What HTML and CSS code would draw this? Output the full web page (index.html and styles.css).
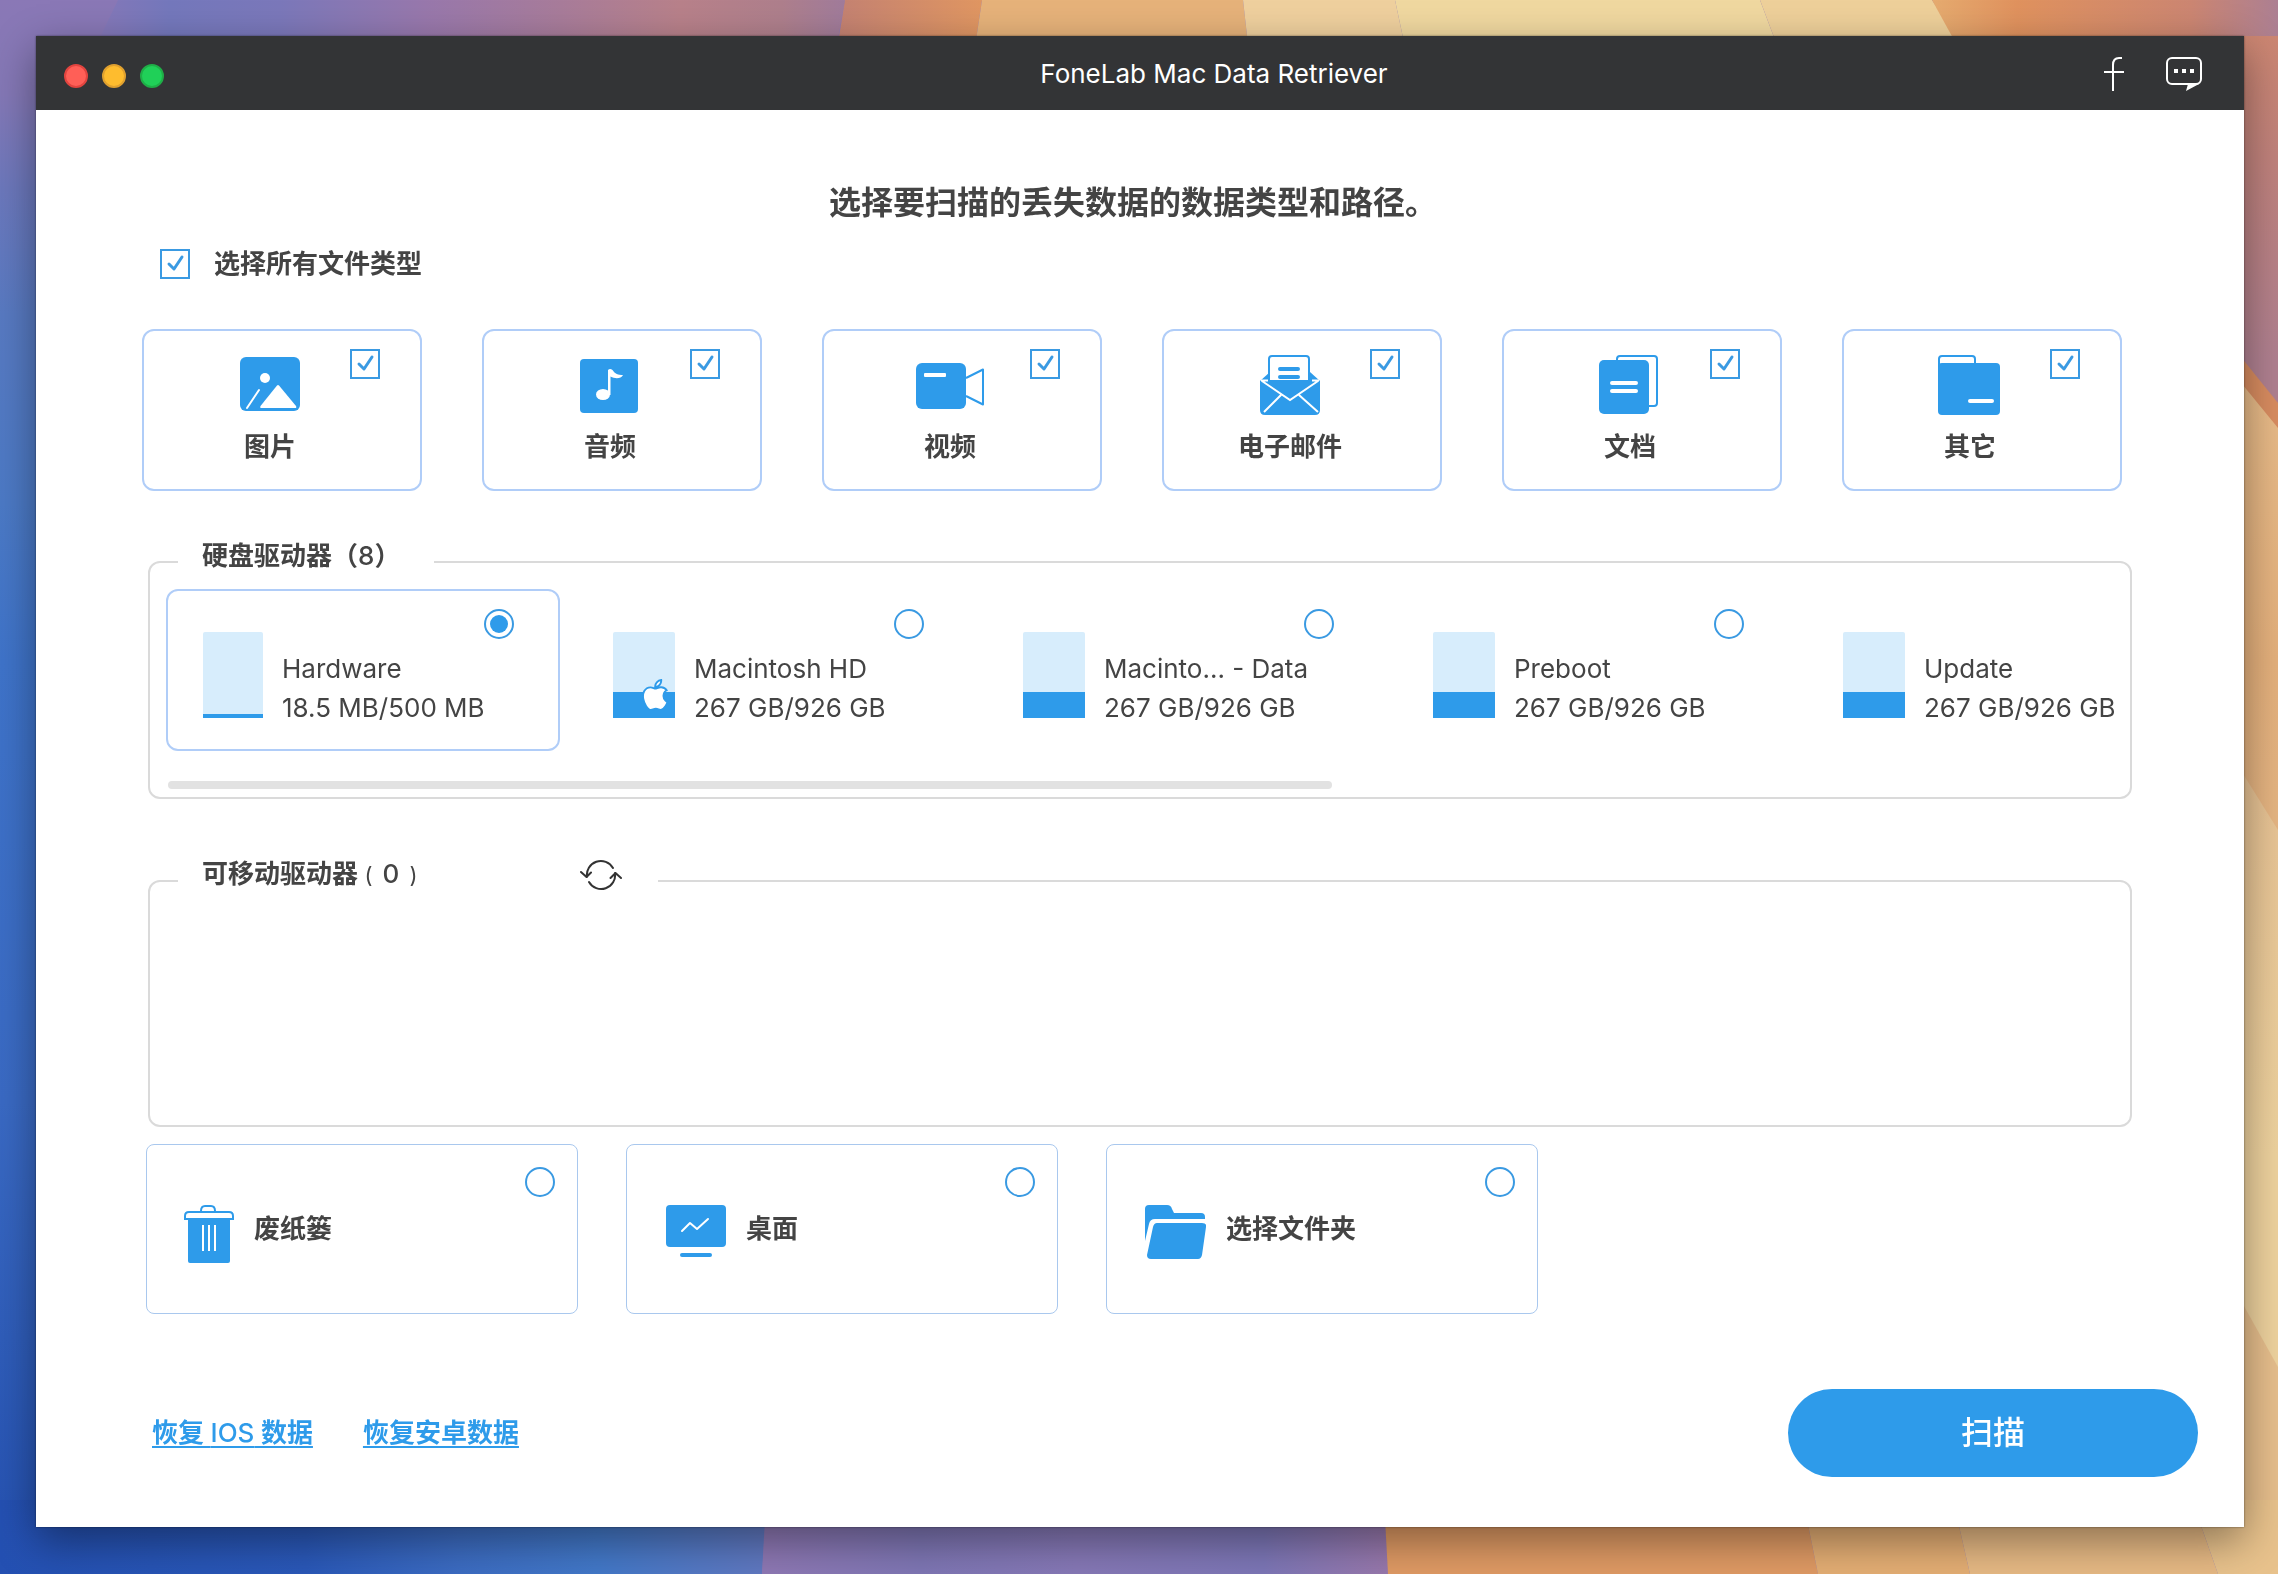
FILE: index.html
```html
<!DOCTYPE html>
<html lang="zh-CN">
<head>
<meta charset="utf-8">
<meta name="viewport" content="width=device-width, initial-scale=1">
<title>FoneLab Mac Data Retriever</title>
<link rel="stylesheet" href="styles.css">
</head>
<body>
<svg class="wallpaper" viewBox="0 0 2278 1574" preserveAspectRatio="none" aria-hidden="true">
  <defs>
    <linearGradient id="topA" gradientUnits="userSpaceOnUse" x1="0" y1="0" x2="850" y2="0">
      <stop offset="0" stop-color="#8c78b6"/><stop offset=".1" stop-color="#8878b8"/><stop offset=".2" stop-color="#7478bc"/><stop offset=".33" stop-color="#7b78ba"/><stop offset=".5" stop-color="#9878ac"/><stop offset=".66" stop-color="#a87c9a"/><stop offset=".8" stop-color="#b8818a"/><stop offset=".92" stop-color="#ae7f8c"/><stop offset="1" stop-color="#9f7b9c"/>
    </linearGradient>
    <linearGradient id="topB" gradientUnits="userSpaceOnUse" x1="840" y1="0" x2="980" y2="0">
      <stop offset="0" stop-color="#c48272"/><stop offset="1" stop-color="#e09662"/>
    </linearGradient>
    <linearGradient id="topC" gradientUnits="userSpaceOnUse" x1="1930" y1="0" x2="2278" y2="0">
      <stop offset="0" stop-color="#e6ac70"/><stop offset=".25" stop-color="#e0925e"/><stop offset=".75" stop-color="#cc8672"/><stop offset="1" stop-color="#ac7f92"/>
    </linearGradient>
    <linearGradient id="left" x1="0" y1="0" x2="0" y2="1">
      <stop offset="0" stop-color="#8a78b6"/><stop offset=".06" stop-color="#8478b6"/><stop offset=".12" stop-color="#6c78bc"/><stop offset=".2" stop-color="#587ac2"/><stop offset=".32" stop-color="#4c7ac6"/><stop offset=".42" stop-color="#3f74ca"/><stop offset=".7" stop-color="#3a6ac4"/><stop offset="1" stop-color="#2450b0"/>
    </linearGradient>
    <linearGradient id="right" x1="0" y1="0" x2="0" y2="1">
      <stop offset="0" stop-color="#cc8672"/><stop offset=".3" stop-color="#c0827c"/><stop offset=".8" stop-color="#b08090"/><stop offset="1" stop-color="#b08090"/>
    </linearGradient>
    <linearGradient id="sand" x1="0" y1="0" x2="0" y2="1">
      <stop offset="0" stop-color="#e8bc8a"/><stop offset=".25" stop-color="#e4b07c"/><stop offset=".5" stop-color="#e6b988"/><stop offset="1" stop-color="#e8c890"/>
    </linearGradient>
    <linearGradient id="sandLow" x1="0" y1="0" x2="0" y2="1">
      <stop offset="0" stop-color="#e6c092"/><stop offset=".5" stop-color="#eed29e"/><stop offset="1" stop-color="#eed29e"/>
    </linearGradient>
    <linearGradient id="bottomA" gradientUnits="userSpaceOnUse" x1="0" y1="0" x2="765" y2="0">
      <stop offset="0" stop-color="#2450b2"/><stop offset=".4" stop-color="#2a58b8"/><stop offset=".6" stop-color="#3c6cc2"/><stop offset=".78" stop-color="#4278c8"/><stop offset="1" stop-color="#6078c0"/>
    </linearGradient>
    <linearGradient id="bottomB" gradientUnits="userSpaceOnUse" x1="765" y1="0" x2="1388" y2="0">
      <stop offset="0" stop-color="#8e78b4"/><stop offset=".25" stop-color="#7e76b4"/><stop offset=".5" stop-color="#8678b6"/><stop offset=".8" stop-color="#7c76b6"/><stop offset="1" stop-color="#9878ac"/>
    </linearGradient>
  </defs>
  <path fill="url(#topA)" d="M0 0H845L820 140H0Z"/>
  <path fill="url(#topB)" d="M845 0H982L970 80H832Z"/>
  <path fill="#e6b27a" d="M982 0H1243L1252 80H970Z"/>
  <path fill="#efd09e" d="M1243 0H1395L1412 80H1252Z"/>
  <path fill="#f0d8a0" d="M1395 0H1760L1790 80H1412Z"/>
  <path fill="#eed09a" d="M1760 0H1932L1985 80H1790Z"/>
  <path fill="url(#topC)" d="M1932 0H2278V80H1976Z"/>
  <path fill="url(#left)" d="M0 0H118L60 120V1574H0Z"/>
  <path fill="url(#right)" d="M2220 36H2278V440H2220Z"/>
  <path fill="#d88c60" d="M2220 331L2278 403V520H2220Z"/>
  <path fill="url(#sand)" d="M2220 357L2278 428V1574H2220Z"/>
  <path fill="url(#sandLow)" d="M2220 737L2278 830V1574H2220Z"/>
  <path fill="#e6be8c" d="M2220 1263L2278 1367V1574H2220Z"/>
  <path fill="url(#bottomA)" d="M0 1500H766L762 1574H0Z"/>
  <path fill="url(#bottomB)" d="M767 1500H1384L1388 1574H762Z"/>
  <path fill="#df9a64" d="M1384 1500H1803L1818 1574H1388Z"/>
  <path fill="#e4ae74" d="M1803 1500H1953L1970 1574H1818Z"/>
  <path fill="#e6b984" d="M1953 1500H2192L2218 1574H1970Z"/>
  <path fill="#e8c28c" d="M2192 1500H2278V1574H2218Z"/>
</svg>

<div class="window">
  <header class="titlebar">
    <div class="lights">
      <button class="light light-close" type="button" aria-label="关闭"></button>
      <button class="light light-min" type="button" aria-label="最小化"></button>
      <button class="light light-max" type="button" aria-label="缩放"></button>
    </div>
    <span class="title">FoneLab Mac Data Retriever</span>
    <div class="actions">
      <button class="icon-button" type="button" aria-label="Facebook">
        <svg width="20" height="34" viewBox="0 0 20 34" fill="none" stroke="#fff" stroke-width="2"><path d="M9 34V8Q9 1 15 1H18M0 15H20"/></svg>
      </button>
      <button class="icon-button" type="button" aria-label="反馈">
        <svg width="36" height="34" viewBox="0 0 36 34"><rect x="1" y="1" width="34" height="26" rx="5" fill="none" stroke="#fff" stroke-width="2"/><path fill="#fff" d="M8 12h4v4H8zM16 12h4v4h-4zM24 12h4v4h-4zM22 27H33L20 34Z"/></svg>
      </button>
    </div>
  </header>

  <main>
    <h1 class="heading">选择要扫描的丢失数据的数据类型和路径。</h1>

    <label class="select-all"><input class="check" type="checkbox" checked>选择所有文件类型</label>

    <section class="types">
      <label class="type">
        <svg class="type-icon" viewBox="0 0 72 60"><rect x="6" y="2" width="60" height="54" rx="6" fill="#2e9bea"/><circle cx="31" cy="23" r="5" fill="#fff"/><path d="M43 30.500Q44 29.500 45 30.500L62 51Q63 53 61 53H27Q25.500 53 26.500 51Z" fill="#fff"/><path d="M25 35L13 53" stroke="#fff" stroke-width="2" stroke-linecap="round"/></svg>
        <span>图片</span><input class="check corner" type="checkbox" checked>
      </label>
      <label class="type">
        <svg class="type-icon" viewBox="0 0 72 60"><rect x="6" y="4" width="58" height="54" rx="4" fill="#2e9bea"/><ellipse cx="29" cy="39.500" rx="7" ry="5.500" fill="#fff"/><path d="M34 40V15Q36 13 38.500 15C41 19 44 20 49 20C47 24 41 24 36.500 21.500V40Z" fill="#fff"/></svg>
        <span>音频</span><input class="check corner" type="checkbox" checked>
      </label>
      <label class="type">
        <svg class="type-icon" viewBox="0 0 72 60"><rect x="2" y="8" width="50" height="46" rx="6" fill="#2e9bea"/><rect x="10" y="18" width="22" height="4" rx="1" fill="#fff"/><path d="M52 23L69 14.500V49.500L52 41" fill="none" stroke="#2e9bea" stroke-width="2" stroke-linejoin="round"/></svg>
        <span>视频</span><input class="check corner" type="checkbox" checked>
      </label>
      <label class="type">
        <svg class="type-icon" viewBox="0 0 72 60"><path d="M6 26L16 17H56L66 26V55Q66 60 61 60H11Q6 60 6 55Z" fill="#2e9bea"/><path d="M15 26V4Q15 1 18 1H52Q55 1 55 4V26Z" fill="#fff" stroke="#2e9bea" stroke-width="2"/><path d="M16 26H54L36 44Z" fill="#2e9bea"/><path d="M26 14H44M26 22H44" stroke="#2e9bea" stroke-width="4" stroke-linecap="round"/><path d="M7 25.500H14M58 25.500H65M8 26L36 45L64 26M27 40L10 57M45 40L64 57" fill="none" stroke="#fff" stroke-width="2"/></svg>
        <span>电子邮件</span><input class="check corner" type="checkbox" checked>
      </label>
      <label class="type">
        <svg class="type-icon" viewBox="0 0 72 60"><rect x="23" y="1" width="40" height="50" rx="3" fill="#fff" stroke="#2e9bea" stroke-width="2"/><rect x="5" y="5" width="50" height="54" rx="5" fill="#2e9bea"/><path d="M18 28H42M18 36H42" stroke="#fff" stroke-width="4" stroke-linecap="round"/></svg>
        <span>文档</span><input class="check corner" type="checkbox" checked>
      </label>
      <label class="type">
        <svg class="type-icon" viewBox="0 0 72 60"><rect x="5" y="1" width="36" height="20" rx="3" fill="#fff" stroke="#2e9bea" stroke-width="2"/><rect x="4" y="8" width="62" height="52" rx="4" fill="#2e9bea"/><path d="M36 46H58" stroke="#fff" stroke-width="4" stroke-linecap="round"/></svg>
        <span>其它</span><input class="check corner" type="checkbox" checked>
      </label>
    </section>

    <fieldset class="group">
      <legend class="legend">硬盘驱动器（<span class="latin">8</span>）</legend>
      <div class="drives">
        <label class="drive selected">
          <span class="gauge"><span class="used" style="height:5%"></span></span>
          <span class="drive-text"><span>Hardware</span><span>18.5 MB/500 MB</span></span>
          <input class="radio corner" type="radio" name="location" checked>
        </label>
        <label class="drive">
          <span class="gauge"><span class="used" style="height:30%"></span>
            <svg class="apple" width="30" height="34" viewBox="-1 -1.500 24 27"><path fill="#fff" stroke="#2e9bea" stroke-width="1.500" d="M12.152 6.896c-.948 0-2.415-1.078-3.96-1.040-2.040.027-3.910 1.183-4.961 3.014-2.117 3.675-.546 9.103 1.519 12.090 1.013 1.454 2.208 3.090 3.792 3.039 1.520-.065 2.090-.987 3.935-.987 1.831 0 2.350.987 3.960.948 1.637-.026 2.676-1.480 3.676-2.948 1.156-1.688 1.636-3.325 1.662-3.415-.039-.013-3.182-1.221-3.220-4.857-.026-3.040 2.480-4.494 2.597-4.559-1.429-2.090-3.623-2.324-4.390-2.376-2-.156-3.675 1.090-4.610 1.090zM15.530 3.830c.843-1.012 1.400-2.427 1.245-3.830-1.207.052-2.662.805-3.532 1.818-.780.896-1.454 2.338-1.273 3.714 1.338.104 2.715-.688 3.559-1.701z"/></svg>
          </span>
          <span class="drive-text"><span>Macintosh HD</span><span>267 GB/926 GB</span></span>
          <input class="radio corner" type="radio" name="location">
        </label>
        <label class="drive">
          <span class="gauge"><span class="used" style="height:30%"></span></span>
          <span class="drive-text"><span>Macinto... - Data</span><span>267 GB/926 GB</span></span>
          <input class="radio corner" type="radio" name="location">
        </label>
        <label class="drive">
          <span class="gauge"><span class="used" style="height:30%"></span></span>
          <span class="drive-text"><span>Preboot</span><span>267 GB/926 GB</span></span>
          <input class="radio corner" type="radio" name="location">
        </label>
        <label class="drive">
          <span class="gauge"><span class="used" style="height:30%"></span></span>
          <span class="drive-text"><span>Update</span><span>267 GB/926 GB</span></span>
          <input class="radio corner" type="radio" name="location">
        </label>
      </div>
      <div class="scroll-thumb" style="width:59.5%"></div>
    </fieldset>

    <fieldset class="group removable">
      <legend class="legend legend-wide">
        <span>可移动驱动器 <span class="paren">(</span><span class="count">0</span><span class="paren">)</span></span>
        <button class="icon-button" type="button" aria-label="刷新">
          <svg width="42" height="32" viewBox="0 0 42 32" fill="none" stroke="#333" stroke-width="2" stroke-linecap="round" stroke-linejoin="round"><path d="M33 9A14 14 0 0 0 7 18M1 13L6.500 18L11 13.500M9 23A14 14 0 0 0 35 14M30.500 19L35.500 14L41 19"/></svg>
        </button>
      </legend>
    </fieldset>

    <section class="places">
      <label class="place">
        <svg width="50" height="62" viewBox="0 0 50 62"><path d="M17 8V6Q17 1 21 1H27Q31 1 31 6V8M1 14V11Q1 7 5 7H45Q49 7 49 11V14Z" fill="#fff" stroke="#2e9bea" stroke-width="2"/><path d="M4 13H46V56Q46 58 44 58H6Q4 58 4 56Z" fill="#2e9bea"/><path d="M19 20V46M25 20V46M31 20V46" stroke="#fff" stroke-width="2"/></svg>
        <span>废纸篓</span><input class="radio corner" type="radio" name="location">
      </label>
      <label class="place">
        <svg width="62" height="62" viewBox="0 0 62 62"><rect x="2" width="60" height="42" rx="4" fill="#2e9bea"/><path d="M18 26L26 18L33 24L44 14" fill="none" stroke="#fff" stroke-width="2" stroke-linecap="round" stroke-linejoin="round"/><path d="M18 50H46" stroke="#2e9bea" stroke-width="4" stroke-linecap="round"/></svg>
        <span>桌面</span><input class="radio corner" type="radio" name="location">
      </label>
      <label class="place">
        <svg width="62" height="62" viewBox="0 0 62 62"><path d="M1 36V4Q1 0 5 0H23Q27 0 28 4L30 8H57Q61 8 61 12V14H11Q6 14 5 19Z" fill="#2e9bea"/><path d="M9 22Q10 18 13 18H58Q63 18 62 22L58 50Q57 54 54 54H7Q3 54 3 50Z" fill="#2e9bea"/></svg>
        <span>选择文件夹</span><input class="radio corner" type="radio" name="location">
      </label>
    </section>
  </main>

  <footer class="footer">
    <a class="link" href="#ios">恢复 <span class="latin">IOS</span> 数据</a>
    <a class="link" href="#android">恢复安卓数据</a>
    <button class="scan" type="button">扫描</button>
  </footer>
</div>
</body>
</html>
```

FILE: styles.css
```css
* {
  box-sizing: border-box;
}

body {
  margin: 0;
  min-height: 100vh;
  padding: 36px 34px 46px 36px;
  background: #8c78b4;
  color: #444;
  font: 600 26px/36px Inter, "Noto Sans CJK SC", sans-serif;
}

button,
input {
  margin: 0;
  font: inherit;
}

.wallpaper {
  position: fixed;
  inset: 0;
  z-index: -1;
  width: 100%;
  height: 100%;
}

.window {
  background: #fff;
  box-shadow: 0 0 2px rgba(0, 0, 0, .5), 0 14px 40px rgba(0, 0, 0, .4);
}

/* Title bar */
.titlebar {
  display: flex;
  align-items: center;
  height: 74px;
  padding: 2px 42px 0 28px;
  background: #333436;
  color: #fff;
}

.lights {
  display: flex;
  gap: 14px;
  padding-top: 4px;
}

.light {
  width: 24px;
  height: 24px;
  padding: 0;
  border: 2px solid;
  border-radius: 50%;
}

.light-close {
  border-color: #e2443f;
  background: #ff5f57;
}

.light-min {
  border-color: #dfa02f;
  background: #febc2e;
}

.light-max {
  border-color: #1fae47;
  background: #20d058;
}

.title {
  flex: 1;
  padding-left: 160px;
  font-weight: 400;
  text-align: center;
}

.actions {
  display: flex;
  gap: 42px;
}

.icon-button {
  display: flex;
  padding: 0;
  border: 0;
  background: none;
}

/* Form controls */
.check,
.radio {
  appearance: none;
  flex: none;
  width: 30px;
  height: 30px;
  border: 2px solid #3a9ae2;
  background: #fff;
}

.check:checked {
  background: #fff url("data:image/svg+xml,%3Csvg xmlns='http://www.w3.org/2000/svg' viewBox='0 0 26 26'%3E%3Cpath d='M7 13L12 18L20 6' fill='none' stroke='%233a9ae2' stroke-width='3' stroke-linecap='round' stroke-linejoin='round'/%3E%3C/svg%3E") center / 26px no-repeat;
}

.radio {
  border-radius: 50%;
}

.radio:checked {
  padding: 4px;
  background: #2e9bea content-box;
}

.corner {
  position: absolute;
}

/* Data types */
.heading {
  margin: 0;
  padding: 71px 14px 0 0;
  font-size: 32px;
  font-weight: 600;
  line-height: 44px;
  text-align: center;
}

.select-all {
  display: flex;
  align-items: center;
  gap: 24px;
  width: fit-content;
  margin: 21px 0 47px 124px;
}

.types {
  display: grid;
  grid-template-columns: repeat(6, 1fr);
  gap: 60px;
  padding: 0 122px 0 106px;
}

.type {
  position: relative;
  display: flex;
  flex-direction: column;
  align-items: center;
  gap: 14px;
  height: 162px;
  padding: 24px 24px 0 0;
  border: 2px solid #b0cdf8;
  border-radius: 12px;
}

.type-icon {
  width: 72px;
  height: 60px;
}

.type .corner {
  top: 18px;
  right: 40px;
}

/* Drives */
.group {
  min-width: 0;
  margin: 47px 112px 0;
  padding: 3px 8px 8px 16px;
  border: 2px solid #dadada;
  border-radius: 12px;
}

.legend {
  min-width: 256px;
  margin-left: 12px;
  padding: 0 24px 12px;
}

.latin {
  font-weight: 500;
}

.drives {
  display: flex;
  gap: 16px;
  overflow: hidden;
}

.drive {
  position: relative;
  display: flex;
  flex: none;
  gap: 19px;
  width: 394px;
  height: 162px;
  padding: 41px 0 0 35px;
  border: 2px solid transparent;
  border-radius: 12px;
}

.drive.selected {
  border-color: #b0cdf8;
}

.drive .corner {
  top: 18px;
  left: 316px;
}

.gauge {
  position: relative;
  display: flex;
  align-items: flex-end;
  width: 62px;
  height: 86px;
  border-radius: 2px;
  background: #d7edfc;
}

.selected .gauge {
  width: 60px;
}

.used {
  flex: 1;
  background: #2e9bea;
}

.apple {
  position: absolute;
  right: 6px;
  bottom: 6px;
}

.drive-text {
  display: flex;
  flex-direction: column;
  padding-top: 17px;
  font-weight: 400;
  line-height: 39px;
}

.scroll-thumb {
  height: 8px;
  margin: 30px 0 0 2px;
  border-radius: 4px;
  background: #e2e2e2;
}

.removable {
  min-height: 271px;
  margin-top: 57px;
}

.legend-wide {
  display: flex;
  align-items: center;
  justify-content: space-between;
  width: 480px;
  padding-right: 36px;
}

.paren {
  font-size: 22px;
  font-weight: 400;
}

.count {
  margin: 0 10px;
  font-weight: 500;
}

/* Other places */
.places {
  display: grid;
  grid-template-columns: repeat(auto-fill, 432px);
  gap: 48px;
  padding: 17px 110px 0;
}

.place {
  position: relative;
  display: flex;
  gap: 20px;
  height: 170px;
  padding: 60px 0 0 37px;
  border: 1px solid #a9c8ee;
  border-radius: 8px;
}

.place span {
  padding-top: 6px;
}

.place .corner {
  top: 22px;
  right: 22px;
}

/* Footer */
.footer {
  display: flex;
  align-items: center;
  gap: 50px;
  padding: 75px 46px 50px 116px;
}

.link {
  color: #2e9bea;
  text-decoration-thickness: 2px;
  text-underline-offset: 4px;
}

.scan {
  width: 410px;
  height: 88px;
  margin-left: auto;
  border: 0;
  border-radius: 44px;
  background: #2e9bea;
  color: #fff;
  font-size: 32px;
  font-weight: 500;
}
```
